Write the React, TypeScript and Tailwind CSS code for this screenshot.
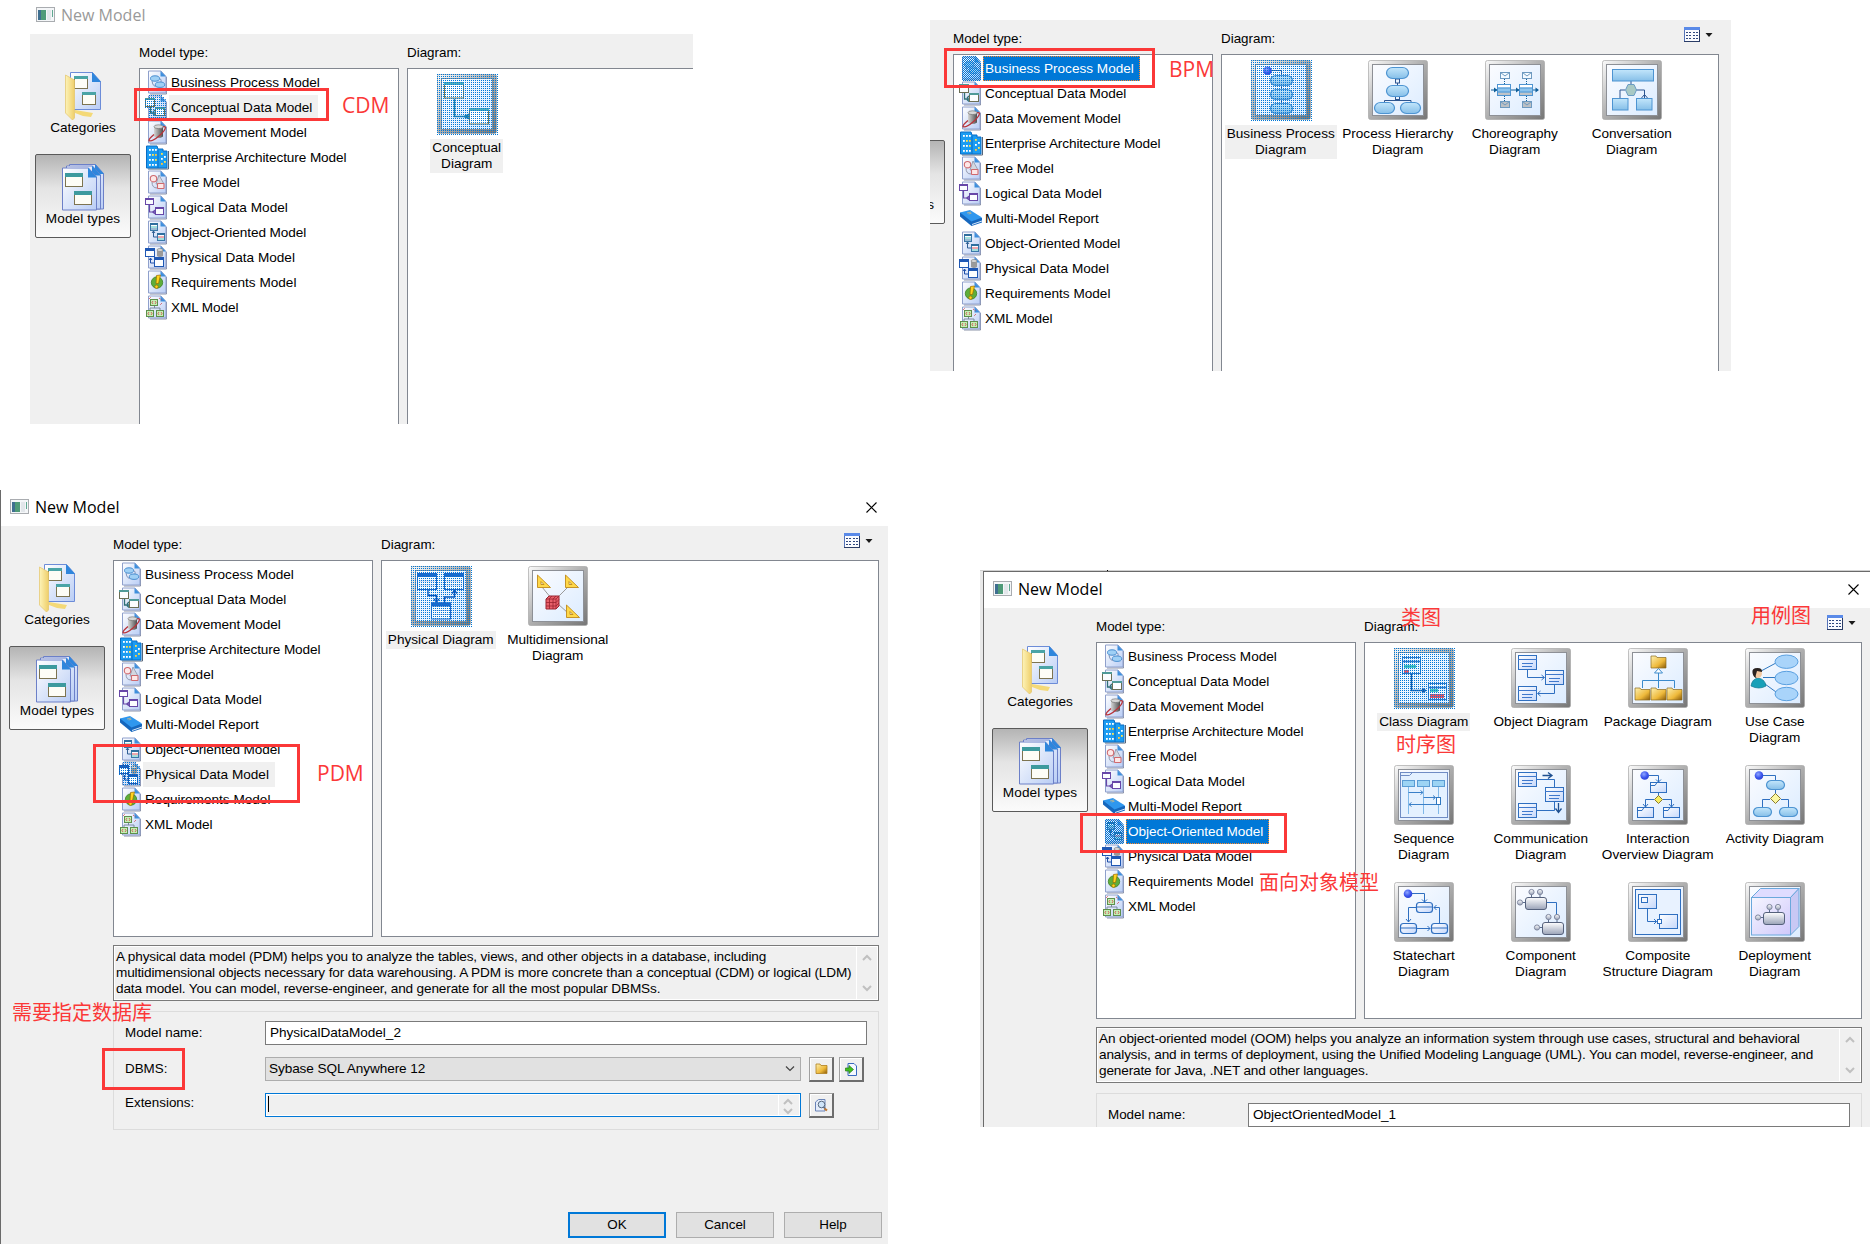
import React from "react";

type Pt = { x: number; y: number };

/* ---------- shared paint servers ---------- */

function Paints() {
  return (
    <svg className="absolute h-0 w-0" aria-hidden="true">
      <defs>
        <linearGradient id="frame" x1="0" y1="0" x2="1" y2="1">
          <stop offset="0" stopColor="#fafafa" />
          <stop offset="0.45" stopColor="#b4b4b4" />
          <stop offset="1" stopColor="#767676" />
        </linearGradient>
        <linearGradient id="glass" x1="0" y1="0" x2="1" y2="1">
          <stop offset="0" stopColor="#fbfcff" />
          <stop offset="1" stopColor="#dcecff" />
        </linearGradient>
        <linearGradient id="paper" x1="0" y1="0" x2="1" y2="1">
          <stop offset="0" stopColor="#ffffff" />
          <stop offset="1" stopColor="#b9cdf5" />
        </linearGradient>
        <linearGradient id="pill" x1="0" y1="0" x2="0" y2="1">
          <stop offset="0" stopColor="#c3e6fb" />
          <stop offset="1" stopColor="#86bfe8" />
        </linearGradient>
        <linearGradient id="box" x1="0" y1="0" x2="1" y2="1">
          <stop offset="0" stopColor="#ffffff" />
          <stop offset="1" stopColor="#c6d8fb" />
        </linearGradient>
        <linearGradient id="gold" x1="0" y1="0" x2="1" y2="1">
          <stop offset="0" stopColor="#fdf0b0" />
          <stop offset="0.6" stopColor="#eeb93a" />
          <stop offset="1" stopColor="#8a5a08" />
        </linearGradient>
        <linearGradient id="folder" x1="0" y1="0" x2="1" y2="0">
          <stop offset="0" stopColor="#fdf3b8" />
          <stop offset="1" stopColor="#efcf6a" />
        </linearGradient>
        <linearGradient id="steel" x1="0" y1="0" x2="0" y2="1">
          <stop offset="0" stopColor="#ffffff" />
          <stop offset="1" stopColor="#9aa3b8" />
        </linearGradient>
        <linearGradient id="drum" x1="0" y1="0" x2="1" y2="0">
          <stop offset="0" stopColor="#d6d6d6" />
          <stop offset="1" stopColor="#4e4e4e" />
        </linearGradient>
        <linearGradient id="lilac" x1="0" y1="0" x2="1" y2="1">
          <stop offset="0" stopColor="#f6f6ff" />
          <stop offset="1" stopColor="#cfc8fb" />
        </linearGradient>
        <radialGradient id="ball" cx="0.4" cy="0.35" r="0.7">
          <stop offset="0" stopColor="#8fa6ff" />
          <stop offset="0.6" stopColor="#3c55ee" />
          <stop offset="1" stopColor="#2a3fd0" />
        </radialGradient>
        <pattern id="dots" width="2" height="2" patternUnits="userSpaceOnUse">
          <rect width="1" height="1" fill="#0078d7" />
        </pattern>
        <pattern id="checks" width="2" height="2" patternUnits="userSpaceOnUse">
          <rect width="1" height="1" fill="#0078d7" />
          <rect x="1" y="1" width="1" height="1" fill="#0078d7" />
        </pattern>
      </defs>
    </svg>
  );
}

/* ---------- list icons, 24 x 24 ---------- */

const Page = () => (
  <>
    <path d="M21.5 7v17H5" fill="none" stroke="#8b93a8" strokeWidth="1" />
    <path d="M3.5 1h12.5l5 5.500v16.500h-17.500z" fill="url(#paper)" stroke="#8fa0cc" />
    <path d="M15.500 1l5.500 5.500h-5.500z" fill="#3f8fdc" />
  </>
);

const MiniBox = ({ x, y, w, h, c, head }: { x: number; y: number; w: number; h: number; c: string; head: string }) => (
  <>
    <rect x={x + 0.5} y={y + 0.5} width={w - 1} height={h - 1} fill="#fbfdff" stroke={c} />
    <rect x={x} y={y} width={w} height={2} fill={head} />
  </>
);

const listIcons: Record<string, React.ReactNode> = {
  bpm: (
    <>
      <Page />
      <path d="M7 11q1 7 6 5M12 8q5 0 4 4" fill="none" stroke="#7f93b8" />
      <ellipse cx="10" cy="8.500" rx="4.500" ry="2.700" fill="#9fd0f5" stroke="#4a8fd0" />
      <ellipse cx="15" cy="14.700" rx="4.700" ry="2.700" fill="#9fd0f5" stroke="#4a8fd0" />
    </>
  ),
  cdm: (
    <>
      <Page />
      <path d="M5.500 12v6h5M8 17l2-2M8 18.500l2 2" fill="none" stroke="#2f6f76" strokeWidth="1.300" />
      <MiniBox x={0} y={3} w={10} h={9} c="#6b6f55" head="#4f9a98" />
      <MiniBox x={10} y={12} w={10} h={9} c="#6b6f55" head="#4f9a98" />
    </>
  ),
  dmm: (
    <>
      <Page />
      <path d="M16.500 7.500Q19.500 6 20.500 7" fill="none" stroke="#b8333a" strokeWidth="1.200" />
      <path d="M9 7v9.500q4.500 3 9 0V7z" fill="url(#drum)" />
      <ellipse cx="13.500" cy="6.700" rx="4.500" ry="1.900" fill="#d8d8d8" stroke="#666" strokeWidth="0.600" />
      <path d="M9 14.500Q3.500 19 4 20.700Q7 22 14 16Q20.500 10.500 20.500 7" fill="none" stroke="#b8333a" strokeWidth="1.300" />
    </>
  ),
  eam: (
    <>
      <path d="M3 24h20.500V6" fill="none" stroke="#566579" strokeWidth="1" />
      <path d="M1.500 1h10.500l1 3h5v2h4v17h-20.500z" fill="#1b9cf2" stroke="#0a6cc4" />
      <path d="M13 5v18" stroke="#0a6cc4" />
      {[
        [4, 4, "#fff"], [7, 4, "#fff"], [10, 4, "#fff"],
        [4, 9, "#fff"], [7, 9, "#ffe14d"], [10, 9, "#ffc83c"],
        [4, 14, "#fff"], [7, 14, "#fff"], [10, 14, "#ffe14d"],
        [4, 19, "#fff"], [7, 19, "#fff"], [10, 19, "#fff"],
        [16, 8, "#ffe14d"], [19, 11, "#fff"], [16, 13, "#fff"], [19, 16, "#ffe14d"], [16, 18, "#ffc83c"],
      ].map(([x, y, c], i) => (
        <rect key={i} x={x as number} y={y as number} width="1.800" height="1.800" fill={c as string} />
      ))}
    </>
  ),
  free: (
    <>
      <Page />
      <path d="M14 5l5 9h-8z" fill="#d4d7e0" stroke="#8c93a8" strokeWidth="0.800" />
      <path d="M7 12q0 6 5 6" fill="none" stroke="#9097ac" />
      <circle cx="8.500" cy="8.700" r="3.200" fill="#fde8e8" stroke="#cf6a6f" strokeWidth="1.100" />
      <rect x="12.500" y="13.500" width="6.500" height="5" rx="0.500" fill="#fde8e8" stroke="#cf6a6f" strokeWidth="1.100" />
    </>
  ),
  ldm: (
    <>
      <Page />
      <path d="M4.500 9v8h6M7.500 17l3-2M7.500 17l3 2" fill="none" stroke="#6747a8" strokeWidth="1.200" />
      <MiniBox x={0} y={3} w={9} h={7} c="#6747a8" head="#6747a8" />
      <MiniBox x={10} y={12} w={9} h={8} c="#6747a8" head="#6747a8" />
    </>
  ),
  report: (
    <>
      <path d="M1 6.500v4L12.500 20l10.500-3.500V12z" fill="#1667bd" />
      <path d="M1 6.500L11 4l12 7.500-10.500 4z" fill="#2f97ee" />
      <path d="M13 18.500l10-3.500" stroke="#dbeafc" />
      <path d="M8 7l4-1M9.500 8l3-.8" stroke="#c9b98a" strokeWidth="0.800" />
    </>
  ),
  oom: (
    <>
      <Page />
      <path d="M8.500 11v6h4M7 13l1.500-2 1.500 2" fill="none" stroke="#2f5f94" />
      <MiniBox x={5} y={3} w={8} h={8} c="#3a78a8" head="#2f6f9f" />
      <path d="M6 7h6" stroke="#4fc0b8" />
      <path d="M6 9h6" stroke="#3a78a8" />
      <MiniBox x={12} y={13} w={8} h={8} c="#3a78a8" head="#2f6f9f" />
      <path d="M13 17h6" stroke="#e0505a" />
      <path d="M13 19h6" stroke="#4fc0b8" />
    </>
  ),
  pdm: (
    <>
      <Page />
      <path d="M12 5v6q3 2 6 0V5z" fill="#9a9a9a" />
      <ellipse cx="15" cy="5" rx="3" ry="1.500" fill="#d8d8d8" stroke="#777" strokeWidth="0.600" />
      <path d="M5.500 13v5h4M4 15l1.500-2 1.500 2" fill="none" stroke="#1f4fa8" />
      <MiniBox x={0} y={3} w={10} h={9} c="#1f58b4" head="#1f58b4" />
      <rect x="0" y="3" width="10" height="3" fill="#1f58b4" />
      <MiniBox x={9} y={12} w={10} h={10} c="#1f58b4" head="#1f58b4" />
      <rect x="9" y="12" width="10" height="3" fill="#1f58b4" />
    </>
  ),
  req: (
    <>
      <Page />
      <circle cx="12" cy="12.500" r="5.700" fill="#5fae3a" stroke="#3c7f28" strokeWidth="0.800" />
      <path d="M11.500 5.500l4-.5-2 8.500h-2.500z" fill="#ffd21e" stroke="#9a6a00" strokeWidth="0.700" />
      <circle cx="11.500" cy="16.700" r="1.700" fill="#ffd21e" stroke="#9a6a00" strokeWidth="0.700" />
    </>
  ),
  xml: (
    <>
      <Page />
      <path d="M9.500 10v3M5 16v-3h10v3" fill="none" stroke="#7a8aa0" />
      <path d="M4 4l2-2M14 3l3 2M17 8l-2 2" stroke="#d0404a" strokeDasharray="1 1" />
      {[
        [5, 4],
        [1, 15],
        [11, 15],
      ].map(([x, y], i) => (
        <g key={i}>
          <rect x={x + 0.5} y={y + 0.5} width="7" height="6" fill="#c4f0b4" stroke="#5f8f4c" />
          <path d={`M${x + 3} ${y + 2}l-1 1.500 1 1.500M${x + 5} ${y + 2}l1 1.500-1 1.500`} fill="none" stroke="#d0404a" strokeWidth="0.800" />
        </g>
      ))}
    </>
  ),
};

const shade: Record<string, string> = {
  bpm: "M3 0h14l5 6v19H3z",
  oom: "M3 0h14l5 6v19H3z",
  cdm: "M3 0h14l5 6v18H3V13H0V3h3z",
  pdm: "M3 0h14l5 6v18H3V13H0V3h3z",
};

function ListIcon({ id, mode }: { id: string; mode?: "soft" | "focus" }) {
  return (
    <svg className="h-[25px] w-6 shrink-0" viewBox="0 0 24 25">
      {listIcons[id]}
      {mode && <path d={shade[id]} fill={mode === "focus" ? "url(#checks)" : "url(#dots)"} />}
    </svg>
  );
}

/* ---------- diagram icons, 60 x 60 ---------- */

const BLUE = "#2f6fc0";

const Wire = ({ d, c = BLUE, w = 1 }: { d: string; c?: string; w?: number }) => <path d={d} fill="none" stroke={c} strokeWidth={w} />;

const Pill = ({ x, y, w, h }: { x: number; y: number; w: number; h: number }) => (
  <rect x={x + 0.5} y={y + 0.5} width={w - 1} height={h - 1} rx={h / 2} fill="url(#pill)" stroke="#4d94d2" strokeWidth="1.200" />
);

const Ball = ({ x, y }: Pt) => <circle cx={x} cy={y} r="4.300" fill="url(#ball)" />;

const Knob = ({ x, y }: Pt) => <circle cx={x} cy={y} r="2.600" fill="url(#steel)" stroke="#8088a0" />;

const ObjBox = ({ x, y }: Pt) => (
  <>
    <rect x={x + 0.5} y={y + 0.5} width="18" height="14" fill="url(#box)" stroke={BLUE} />
    <path d={`M${x} ${y + 4.5}h19M${x + 4} ${y + 8.5}h11M${x + 4} ${y + 11.5}h10`} stroke="#3f78cc" />
  </>
);

const Folder = ({ x, y }: Pt) => (
  <path d={`M${x} ${y + 2}v-2h5l1 1.500h9v10.500h-15z`} fill="url(#gold)" stroke="#8a6a20" strokeWidth="0.700" />
);

const Tabbed = ({ x, y }: Pt) => (
  <>
    <rect x={x + 0.5} y={y + 0.5} width="16" height="10" fill="url(#box)" stroke={BLUE} />
    <path d={`M${x} ${y + 3.5}h5l2-3`} fill="none" stroke={BLUE} />
  </>
);

const Component = ({ x, y }: Pt) => (
  <>
    <path d={`M${x + 6.5} ${y - 3}v4M${x + 15} ${y - 3}v4M${x - 3} ${y + 5.5}h4`} stroke="#5a6c8c" />
    <rect x={x + 0.5} y={y + 0.5} width="21" height="12" rx="2.500" fill="url(#steel)" stroke="#55617c" />
    <Knob x={x + 6.5} y={y - 5} />
    <Knob x={x + 15} y={y - 5} />
    <Knob x={x - 5} y={y + 5.5} />
  </>
);

const StateBox = ({ x, y }: Pt) => (
  <>
    <rect x={x + 0.5} y={y + 0.5} width="16" height="10" rx="3" fill="url(#box)" stroke={BLUE} strokeWidth="1.200" />
    <path d={`M${x} ${y + 5}h17`} stroke={BLUE} />
  </>
);

const Mail = ({ x, y, f }: Pt & { f: string }) => (
  <>
    <rect x={x + 0.5} y={y + 0.5} width="9" height="6" fill={f} stroke="#6e9ac0" />
    <path d={`M${x + 0.5} ${y + 0.5}l4.500 3.500 4.500-3.500`} fill="none" stroke="#6e9ac0" />
  </>
);

const Square = ({ x, y }: Pt) => (
  <path fillRule="evenodd" d={`M${x} ${y}v12.500h13zM${x + 3.5} ${y + 6.5}v3h3z`} fill="#ffd84a" stroke="#c08a1a" strokeWidth="0.900" />
);

const diagramIcons: Record<string, React.ReactNode> = {
  conceptual: (
    <>
      <Wire d="M17.500 25v17.500h15M27 42.500l6-2.500M27 42.500l6 2.500" c="#1f7fa8" w={1.5} />
      {[
        [7, 8],
        [32, 34],
      ].map(([x, y], i) => (
        <g key={i}>
          <rect x={x + 0.5} y={y + 0.5} width="19" height="15.500" fill="#ffffff" stroke="#7b7a55" />
          <rect x={x} y={y} width="20" height="3" fill="#4fb0bc" />
        </g>
      ))}
    </>
  ),
  bpd: (
    <>
      <Wire d="M20 10.500h10.500v5M30.500 25v4.500M30.500 39v4.500" c="#2c5590" />
      <Ball x={16.5} y={10.7} />
      <Pill x={19} y={15} w={23} h={11} />
      <Pill x={19} y={29} w={23} h={11} />
      <Pill x={19} y={43} w={23} h={11} />
    </>
  ),
  hierarchy: (
    <>
      <Wire d="M29.500 18v7M29.500 36v5M16.500 43v-2.500h26.500v2.500" c="#2c5590" />
      <rect x="27.500" y="19" width="4" height="4" fill="#eaf4ff" stroke="#2c5590" />
      <rect x="27.500" y="36.500" width="4" height="3" fill="#eaf4ff" stroke="#2c5590" />
      <Pill x={18} y={7} w={23} h={12} />
      <Pill x={18} y={25} w={23} h={12} />
      <Pill x={6} y={42} w={21} h={12} />
      <Pill x={32} y={42} w={21} h={12} />
    </>
  ),
  choreography: (
    <>
      <path d="M19.500 19v5M41.500 19v5M19.500 36v5M41.500 36v5" stroke="#0f5f9a" strokeDasharray="1 1" />
      <Wire d="M6 30h6M26 30h8M48 30h5" c="#0f5f9a" />
      <path d="M9 27.500l3.500 2.500L9 32.500zM31 27.500l3.500 2.500L31 32.500zM50.500 27.500l3.500 2.500-3.500 2.500z" fill="#0f5f9a" />
      <Mail x={15} y={12} f="#f4faff" />
      <Mail x={37} y={12} f="#f4faff" />
      <Mail x={15} y={41} f="#bcc0c4" />
      <Mail x={37} y={41} f="#bcc0c4" />
      {[12, 34].map((x) => (
        <g key={x}>
          <rect x={x + 0.5} y="24.500" width="13" height="11" fill="#8cc4ee" stroke="#4d94d2" />
          <rect x={x + 1} y="25" width="12" height="2.500" fill="#fff" />
          <rect x={x + 1} y="32.500" width="12" height="2.500" fill="#c0c4c8" />
          <path d={`M${x + 1} 28h12M${x + 1} 32h12`} stroke="#4d94d2" />
        </g>
      ))}
    </>
  ),
  conversation: (
    <>
      <Wire d="M29 21v4M23 30h-5v9M34 30h8.500v9M39.500 38l3-3.500 3 3.500" c="#2c5590" />
      <rect x="10.500" y="9.500" width="41" height="11.500" fill="url(#pill)" stroke="#4d94d2" />
      <path d="M26 24.500h6l2.500 5.500-2.500 5.500h-6l-2.500-5.500z" fill="#a9c9c4" stroke="#6a9cc4" />
      <rect x="10.500" y="38.500" width="15.500" height="11.500" fill="url(#pill)" stroke="#4d94d2" />
      <rect x="34.500" y="38.500" width="15.500" height="11.500" fill="url(#pill)" stroke="#4d94d2" />
    </>
  ),
  physical: (
    <>
      <Wire d="M17 24v5.500h8.500V36M23 33l2.500 3 2.500-3M33.500 37v-6h10v-6M41 27.500l2.500-3 2.500 3" c="#0f52b8" w={1.4} />
      {[
        [6, 7],
        [33, 7],
        [20, 36.5],
      ].map(([x, y], i) => (
        <g key={i}>
          <rect x={x + 0.5} y={y + 0.5} width="19" height="16" fill="#f8fbff" stroke="#1f66c8" />
          <rect x={x} y={y} width="20" height="4" fill="#1f66c8" />
          <path d={`M${x + 2} ${y + 8}h16M${x + 2} ${y + 12}h16`} stroke="#b5c4ee" />
        </g>
      ))}
    </>
  ),
  multi: (
    <>
      <Wire d="M14 21l9 11M40 21L29 32M30 38l10 9" c="#9a9a9a" />
      <Square x={9.5} y={9} />
      <Square x={37.5} y={9} />
      <Square x={38.5} y={39} />
      <path d="M18 33l3-3h10v10l-3 3h-10z" fill="#e8606a" stroke="#9a2430" />
      <path d="M18 33h10v10M28 33l3-3M18 36.500h10l3-3M18 40h10l3-3M21.500 33v10M25 33v10M21 33l3-3M25 33l3-3" fill="none" stroke="#9a2430" strokeWidth="0.800" />
    </>
  ),
  class: (
    <>
      <Wire d="M17.500 26v16.500h12" c="#1558a8" w={1.4} />
      <path d="M28 39.500l5 3-5 3z" fill="#1558a8" />
      {[
        [8, 9],
        [34, 35],
      ].map(([x, y], i) => (
        <g key={i}>
          <rect x={x + 0.5} y={y + 0.5} width="18" height="16" fill="#eef6ff" stroke="#2f78c8" />
          <path d={`M${x} ${y + 4.5}h18`} stroke="#2f78c8" strokeWidth="1.500" />
        </g>
      ))}
      <rect x="10" y="17" width="12" height="3" fill="#49c8c0" />
      <rect x="10" y="22" width="5" height="3" fill="#e0566a" />
      <rect x="36" y="41" width="8" height="3" fill="#49c8c0" />
      <rect x="36" y="46" width="14" height="4" fill="#e0566a" />
    </>
  ),
  object: (
    <>
      <Wire d="M16.500 22v7.500h16.500M30.500 27l3 2.500-3 2.500M43.500 37v8.500H27M29.500 43l-3 2.500 3 2.500" />
      <ObjBox x={7} y={7} />
      <ObjBox x={34} y={22} />
      <ObjBox x={7} y={38} />
    </>
  ),
  package: (
    <>
      <Wire d="M30.500 25v15M14.500 40v-7.500h32v7.500" c="#3a8acc" />
      <path d="M30.500 20.500l4 4.500h-8z" fill="#fff" stroke="#3a8acc" />
      <Folder x={23} y={8} />
      <Folder x={7} y={40} />
      <Folder x={23} y={40} />
      <Folder x={39} y={40} />
    </>
  ),
  usecase: (
    <>
      <Wire d="M17 22.500l13-7M18 29.500h12M20 36l11 8" c="#2f78c0" />
      <ellipse cx="41.500" cy="13.700" rx="11.500" ry="6.700" fill="#a9d4fa" stroke="#5aa0e0" />
      <ellipse cx="41.500" cy="30" rx="11.500" ry="6.700" fill="#a9d4fa" stroke="#5aa0e0" />
      <ellipse cx="41.500" cy="46" rx="11.500" ry="6.700" fill="#a9d4fa" stroke="#5aa0e0" />
      <path d="M6 38q1-7 7-8 7 1 8 8-7 4-15 0z" fill="#18a0b8" stroke="#0e7890" strokeWidth="0.700" />
      <circle cx="12.500" cy="25.500" r="4.500" fill="#f4c8a0" />
      <path d="M7.500 25q-1-5 5-5 5 0 4.500 4l-5-1-1 3.500q-1 3 1 3.500-3.500 0-4.500-5z" fill="#2a2220" />
    </>
  ),
  sequence: (
    <>
      <rect x="6.500" y="7.500" width="47" height="45" fill="#e4f1ff" stroke="#6f8cc4" />
      <path d="M6.500 10.500h9l3-3" fill="none" stroke="#6f8cc4" />
      <path d="M14.500 22v27M29.500 22v27M44.500 22v27" stroke="#7fb8e8" />
      <rect x="8.500" y="15.500" width="12" height="6" fill="#9cd4f4" stroke="#5a9cd4" />
      <rect x="23.500" y="15.500" width="12" height="6" fill="#9cd4f4" stroke="#5a9cd4" />
      <rect x="38.500" y="15.500" width="12" height="6" fill="#9cd4f4" stroke="#5a9cd4" />
      <rect x="42.500" y="32.500" width="4" height="7" fill="#fff" stroke="#2f78c0" />
      <Wire d="M14.500 27.500h14M26.500 25.500l2.500 2-2.500 2M29.500 32.500h12M39 30.500l2.500 2-2.500 2M42 39.500H15M17.500 37.500l-2.500 2 2.500 2" c="#3a80c8" />
    </>
  ),
  communication: (
    <>
      <Wire d="M26 14.500h17.500v8M43.500 37v8.500H26" />
      <Wire d="M31.500 10.500h9.500M37 7.500l4 3-4 3M47.500 38v9M44.500 43.500l3 4 3-4" c="#1f5090" w={1.3} />
      <ObjBox x={7} y={7} />
      <ObjBox x={34} y={22} />
      <ObjBox x={7} y={38} />
    </>
  ),
  interaction: (
    <>
      <Wire d="M21 10.500h9.500v6.500M28 14.500l2.500 2.500 2.500-2.500M30.500 28v3M26 34.500h-8.500V42M15 39l2.500 3 2.500-3M35 34.500h8.500V42M41 39l2.500 3 2.500-3" />
      <Ball x={16.7} y={10.5} />
      <Tabbed x={22} y={17} />
      <Tabbed x={9} y={42} />
      <Tabbed x={35} y={42} />
      <path d="M30.500 30.500l4 4-4 4-4-4z" fill="#f8ee60" stroke="#8a7a30" />
    </>
  ),
  activity: (
    <>
      <Wire d="M18 10.500h12.500v5M30.500 25v4M25 34.500h-7.500V42M36 34.500h7.500V42" />
      <Ball x={14} y={10.5} />
      <Pill x={21} y={15} w={19} h={10} />
      <Pill x={8} y={42} w={19} h={10} />
      <Pill x={34} y={42} w={19} h={10} />
      <path d="M30.500 28.500l5 5-5 5-5-5z" fill="#fbf7a0" stroke="#8a7a30" />
    </>
  ),
  statechart: (
    <>
      <Wire d="M18 11.500h12.500V20M28 17.500l2.500 2.500 2.500-2.500M22 25.500h-7.500V40M12 37l2.500 3 2.500-3M23 46.500h13M33.500 44l2.500 2.500-2.500 2.500M45.500 41V25.500H40M42.500 23L40 25.500l2.500 2.500" />
      <Ball x={14} y={11.7} />
      <StateBox x={22} y={20} />
      <StateBox x={6} y={41} />
      <StateBox x={37} y={41} />
    </>
  ),
  component: (
    <>
      <Wire d="M36 20.500h9.500V33" />
      <Component x={14} y={15} />
      <Component x={31} y={40} />
    </>
  ),
  composite: (
    <>
      <rect x="7.500" y="7.500" width="45" height="45" fill="#e8f2ff" stroke={BLUE} />
      <rect x="10.500" y="12.500" width="18" height="14" fill="url(#box)" stroke={BLUE} />
      <rect x="13.500" y="15.500" width="6" height="5" fill="#f4f8ff" stroke={BLUE} />
      <rect x="31.500" y="32.500" width="18" height="14" fill="url(#box)" stroke={BLUE} />
      <rect x="29.500" y="37.500" width="4" height="4" fill="#fff" stroke={BLUE} />
      <Wire d="M19.500 26.500v13h9M26 37l2.500 2.500L26 42" />
    </>
  ),
  deployment: (
    <>
      <path d="M6.500 15.500l9-9h38.500l-8.500 9z" fill="#dfdcff" stroke="#6aa8dc" />
      <path d="M54 6.500v38l-8.500 8.500v-37.500z" fill="#c8c8f4" stroke="#6aa8dc" />
      <rect x="6.500" y="15.500" width="39" height="37.500" fill="url(#lilac)" stroke="#6aa8dc" />
      <Component x={18} y={30} />
    </>
  ),
};

function DiagramIcon({ id, selected }: { id: string; selected?: boolean }) {
  return (
    <svg className="block h-[61px] w-[61px]" viewBox="0 0 61 61">
      <rect x="0.500" y="0.500" width="59" height="59" rx="2" fill="url(#frame)" stroke="#a8a8a8" strokeOpacity="0.700" />
      <rect x="4.500" y="4.500" width="51" height="51" fill="url(#glass)" stroke="#8d9096" />
      {diagramIcons[id]}
      {selected && <rect width="61" height="61" fill="url(#dots)" />}
    </svg>
  );
}

/* ---------- small window icons ---------- */

const AppIcon = () => (
  <svg className="h-4 w-[19px]" viewBox="0 0 19 16">
    <rect x="0.500" y="0.500" width="18" height="14" fill="#f4f6f8" stroke="#a9acb0" />
    <rect x="2" y="3" width="8" height="10" fill="#4f9a78" />
    <rect x="2" y="3" width="3" height="10" fill="#3f6f90" />
    <rect x="11" y="3" width="4" height="10" fill="#e2e6ea" />
    <rect x="16" y="3" width="1" height="7" fill="#5fa890" />
  </svg>
);

const CloseIcon = () => (
  <svg className="h-[11px] w-[11px]" viewBox="0 0 11 11">
    <path d="M0.500 0.500l10 10M10.500 0.500l-10 10" stroke="#000" strokeWidth="1.100" />
  </svg>
);

const ViewIcon = () => (
  <svg className="h-[15px] w-[29px]" viewBox="0 0 29 15">
    <rect x="0.500" y="0.500" width="15" height="14" fill="#fbfcff" stroke="#5573b8" />
    <rect x="0" y="0" width="16" height="3" fill="#5a8ae8" />
    <path d="M0 14.500h16M15.500 3v12" stroke="#2a3c66" />
    {[5, 8, 11].map((y) => (
      <path key={y} d={`M2 ${y + 0.5}h2M5 ${y + 0.5}h2M9 ${y + 0.5}h2M12 ${y + 0.5}h2`} stroke="#31497f" />
    ))}
    <path d="M21.500 6h7L25 10z" fill="#1a1a1a" />
  </svg>
);

const CategoriesIcon = () => (
  <svg className="h-12 w-9" viewBox="0 0 36 48">
    <path d="M10 38l18 3-2 4-8-1-8-3z" fill="#f4d977" />
    <path d="M5.500 0.500h22l8 9v28h-30z" fill="url(#paper)" stroke="#6c8cd8" />
    <path d="M27 0l9 10h-9z" fill="#2f86dc" />
    <rect x="9.500" y="4.500" width="13" height="12" fill="#fdfdf6" stroke="#7d7450" />
    <rect x="9" y="4" width="14" height="3" fill="#4aa4a6" />
    <rect x="17.500" y="20.500" width="13" height="12" fill="#fdfdf6" stroke="#7d7450" />
    <rect x="17" y="20" width="14" height="3" fill="#4aa4a6" />
    <path d="M0.500 3l9 5v38l-2 2-7-7z" fill="url(#folder)" stroke="#e4c468" strokeWidth="0.700" />
  </svg>
);

const ModelTypesIcon = () => (
  <svg className="h-[47px] w-[42px]" viewBox="0 0 42 47">
    {[
      [7, 0],
      [4, 1.5],
      [0, 3.5],
    ].map(([x, y]) => (
      <g key={x}>
        <path d={`M${x + 0.5} ${y + 0.5}h26l8 9v${45.5 - y - 10 + (x === 0 ? 1 : 0)}h-34z`} fill="url(#paper)" stroke="#6c80c8" />
        <path d={`M${x + 26} ${y}l9 10h-9z`} fill="#2f86dc" />
      </g>
    ))}
    <rect x="3.500" y="9.500" width="17" height="13" fill="#fdfdf6" stroke="#7d7450" />
    <rect x="3" y="9" width="18" height="4" fill="#3d9a9e" />
    <rect x="12.500" y="27.500" width="17" height="13" fill="#fdfdf6" stroke="#7d7450" />
    <rect x="12" y="27" width="18" height="4" fill="#3d9a9e" />
  </svg>
);

/* ---------- dialog pieces ---------- */

type Model = { id: string; name: string; tracking?: string };

const allModels: Model[] = [
  { id: "bpm", name: "Business Process Model" },
  { id: "cdm", name: "Conceptual Data Model", tracking: "tracking-[-0.04px]" },
  { id: "dmm", name: "Data Movement Model", tracking: "tracking-[-0.06px]" },
  { id: "eam", name: "Enterprise Architecture Model", tracking: "tracking-[-0.1px]" },
  { id: "free", name: "Free Model" },
  { id: "ldm", name: "Logical Data Model", tracking: "tracking-[0.03px]" },
  { id: "report", name: "Multi-Model Report", tracking: "tracking-[-0.06px]" },
  { id: "oom", name: "Object-Oriented Model", tracking: "tracking-[-0.07px]" },
  { id: "pdm", name: "Physical Data Model" },
  { id: "req", name: "Requirements Model" },
  { id: "xml", name: "XML Model", tracking: "tracking-[-0.1px]" },
];

function ModelList({ models, selected, focused }: { models: Model[]; selected: string; focused?: boolean }) {
  return (
    <ul className="h-[377px] w-[260px] border border-[#828790] bg-white pt-px pl-[5px]">
      {models.map((m) => {
        const on = m.id === selected;
        const tone = on ? (focused ? "bg-[#0078d7] text-white outline-1 -outline-offset-1 outline-dotted outline-[#ff8728]" : "bg-[#f0f0f0]") : "";
        return (
          <li key={m.id} className="flex h-[25px]">
            <ListIcon id={m.id} mode={on ? (focused ? "focus" : "soft") : undefined} />
            <span className={`h-[25px] pr-1.5 pl-0.5 text-[13.6px] leading-[25px] whitespace-nowrap ${m.tracking ?? ""} ${tone}`}>{m.name}</span>
          </li>
        );
      })}
    </ul>
  );
}

type Diagram = { id: string; lines: string[] };

function DiagramGrid({ items }: { items: Diagram[] }) {
  return (
    <div className="grid h-[377px] w-[498px] auto-rows-[117px] grid-cols-[repeat(4,117px)] border border-[#828790] bg-white pt-[5px] pl-px">
      {items.map((d, i) => (
        <div key={d.id} className="flex flex-col items-center">
          <DiagramIcon id={d.id} selected={i === 0} />
          <div className={`mt-1 mr-[1.5px] px-0.5 py-px text-center text-[13.6px] leading-4 whitespace-nowrap ${i === 0 ? "bg-[#f0f0f0]" : ""}`}>
            {d.lines.map((l) => (
              <div key={l}>{l}</div>
            ))}
          </div>
        </div>
      ))}
    </div>
  );
}

function Sidebar() {
  return (
    <div className="flex w-[112px] flex-col pl-2">
      <div className="mt-[38px] flex w-24 flex-col items-center">
        <CategoriesIcon />
        <span className="text-[13.6px] leading-4">Categories</span>
      </div>
      <div className="mt-[18px] flex h-[84px] w-24 flex-col items-center rounded-[2px] border border-[#5a5a5a] bg-linear-to-b from-[#b4b4b4] via-[#e4e4e4] via-40% to-[#fbfbfb] pt-[9px]">
        <ModelTypesIcon />
        <span className="text-[13.6px] leading-4 tracking-[0.1px]">Model types</span>
      </div>
    </div>
  );
}

const Chevron = ({ up, c = "#c0c0c0" }: { up?: boolean; c?: string }) => (
  <svg className="h-[7px] w-2.5" viewBox="0 0 10 7">
    <path d={up ? "M1 6l4-4 4 4" : "M1 1l4 4 4-4"} fill="none" stroke={c} strokeWidth="2" />
  </svg>
);

function Description({ lines }: { lines: string[] }) {
  return (
    <div className="mt-2 flex h-14 w-[766px] border border-[#7a7a7a] bg-[#f0f0f0] shadow-[inset_0_0_0_1px_#fff]">
      <div className="w-[742px] pt-[3px] pl-0.5 text-[13.6px] leading-4 tracking-[-0.142px] whitespace-nowrap">
        {lines.map((l) => (
          <div key={l}>{l}</div>
        ))}
      </div>
      <div className="flex w-[21px] flex-col items-center justify-between border-l border-white py-2">
        <Chevron up />
        <Chevron />
      </div>
    </div>
  );
}

function ToolButton({ children }: { children: React.ReactNode }) {
  return (
    <div className="flex h-[25px] w-[25px] items-center justify-center border border-r-2 border-b-2 border-[#a0a0a0] border-r-[#6d6d6d] border-b-[#6d6d6d] bg-[#f0f0f0] shadow-[inset_1px_1px_0_#fff]">
      {children}
    </div>
  );
}

const fieldLabel = "w-[140px] text-[13.4px] leading-4";

function NameField({ value }: { value: string }) {
  return (
    <div className="flex items-center">
      <span className={fieldLabel}>Model name:</span>
      <div className="h-6 w-[602px] border border-[#7a7a7a] bg-white pl-1 text-[13.6px] leading-[21px] tracking-[-0.03px]">{value}</div>
    </div>
  );
}

type DialogProps = {
  width: string;
  models: Model[];
  selected: string;
  focused?: boolean;
  diagrams: Diagram[];
  inactive?: boolean;
  children?: React.ReactNode;
};

function Dialog({ width, models, selected, focused, diagrams, inactive, children }: DialogProps) {
  return (
    <section className={`flex h-[754px] shrink-0 flex-col border-l border-[#6a6a6a] bg-[#f0f0f0] ${width}`}>
      <header className="flex h-9 shrink-0 items-center justify-between bg-white pr-[11px] pb-0.5 pl-[9px]">
        <div className="flex items-center gap-[6px]">
          <AppIcon />
          <h1 className={`font-['Open_Sans','Noto_Sans',sans-serif] text-[16px] leading-5 ${inactive ? "text-[#999999]" : "text-black"}`}>New Model</h1>
        </div>
        <CloseIcon />
      </header>
      <div className="flex">
        <Sidebar />
        <div className="flex flex-col">
          <div className="flex h-[34px] w-[766px] pt-[11px] text-[13.4px] leading-4">
            <span className="w-[268px]">Model type:</span>
            <span>Diagram:</span>
            <span className="-mt-1 mr-[6px] ml-auto">
              <ViewIcon />
            </span>
          </div>
          <div className="flex gap-2">
            <ModelList models={models} selected={selected} focused={focused} />
            <DiagramGrid items={diagrams} />
          </div>
          {children}
        </div>
      </div>
    </section>
  );
}

const buttonClass = "h-[26px] w-[98px] border border-[#adadad] bg-[#e1e1e1] text-center text-[13.4px] leading-6";

function PhysicalForm() {
  return (
    <>
      <Description
        lines={[
          "A physical data model (PDM) helps you to analyze the tables, views, and other objects in a database, including",
          "multidimensional objects necessary for data warehousing. A PDM is more concrete than a conceptual (CDM) or logical (LDM)",
          "data model. You can model, reverse-engineer, and generate for all the most popular DBMSs.",
        ]}
      />
      <div className="mt-[10px] flex h-[119px] flex-col border border-[#dcdcdc] pt-[9px] pl-[11px]">
        <NameField value="PhysicalDataModel_2" />
        <div className="mt-3 flex items-start">
          <span className={`${fieldLabel} mt-1`}>DBMS:</span>
          <div className="flex h-6 w-[536px] items-center justify-between border border-[#adadad] bg-[#e1e1e1] pr-[5px] pl-[3px] text-[13.6px] tracking-[-0.09px]">
            Sybase SQL Anywhere 12
            <svg className="h-[6px] w-[10px]" viewBox="0 0 10 6">
              <path d="M1 0.500l4 4 4-4" fill="none" stroke="#444" strokeWidth="1.200" />
            </svg>
          </div>
          <div className="ml-2 flex gap-[5px]">
            <ToolButton>
              <svg className="h-3 w-[13px]" viewBox="0 0 13 12">
                <path d="M1 3V1h4l1 1.500h6v8H1z" fill="url(#gold)" stroke="#b08020" strokeWidth="0.800" />
              </svg>
            </ToolButton>
            <ToolButton>
              <svg className="h-[13px] w-3" viewBox="0 0 12 13">
                <path d="M3 0.500h6l2.500 2.500v9.500H3z" fill="#f4f8ff" stroke="#3a6ac0" />
                <path d="M0.500 5h3.500V2.500L8.500 6.500 4 10.500V8H0.500z" fill="#3fc020" stroke="#2a7a18" strokeWidth="0.700" />
              </svg>
            </ToolButton>
          </div>
        </div>
        <div className="mt-[11px] flex items-start">
          <span className={`${fieldLabel} mt-[2px]`}>Extensions:</span>
          <div className="flex h-6 w-[536px] items-stretch border border-[#0078d7] bg-[#f0f0f0] pl-0.5 shadow-[inset_0_0_0_1px_#fff]">
            <span className="mt-0.5 h-4 w-px bg-black" />
            <div className="ml-auto flex w-[22px] flex-col items-center justify-between border-l border-white pt-[4px] pr-1 pb-px">
              <Chevron up />
              <Chevron />
            </div>
          </div>
          <div className="ml-2">
            <ToolButton>
              <svg className="h-[13px] w-[13px]" viewBox="0 0 13 13">
                <path d="M0.500 3l3-2.500h6.500v11.500H0.500z" fill="#e4ecfa" stroke="#6a84b8" />
                <circle cx="6.500" cy="5.500" r="3.300" fill="#cfe4f8" stroke="#5a6a80" />
                <path d="M8.500 8l1.500 1.500" stroke="#5a6a80" strokeWidth="1.500" />
                <path d="M9.500 9.500l2.500 2" stroke="#c07830" strokeWidth="2.200" />
              </svg>
            </ToolButton>
          </div>
        </div>
      </div>
      <div className="mt-[82px] -mr-[3px] flex justify-end gap-[10px]">
        <div className="h-[26px] w-[98px] border-2 border-[#0078d7] bg-[#e1e1e1] text-center text-[13.4px] leading-[22px]">OK</div>
        <div className={buttonClass}>Cancel</div>
        <div className={buttonClass}>Help</div>
      </div>
    </>
  );
}

function ObjectForm() {
  return (
    <>
      <Description
        lines={[
          "An object-oriented model (OOM) helps you analyze an information system through use cases, structural and behavioral",
          "analysis, and in terms of deployment, using the Unified Modeling Language (UML). You can model, reverse-engineer, and",
          "generate for Java, .NET and other languages.",
        ]}
      />
      <div className="mt-[10px] flex h-[119px] flex-col border border-[#dcdcdc] pt-[9px] pl-[11px]">
        <NameField value="ObjectOrientedModel_1" />
      </div>
    </>
  );
}

/* ---------- red mark-up laid over the dialogs ---------- */

const Mark = ({ at }: { at: string }) => <div className={`absolute border-[3px] border-[#fb3838] ${at}`} />;

const Note = ({ at, children }: { at: string; children: string }) => (
  <div className={`absolute leading-6 whitespace-nowrap text-[#fb3838] ${at}`}>{children}</div>
);

const latin = "font-['Open_Sans','Noto_Sans',sans-serif] text-[21px]";
const han = "font-['Noto_Sans_CJK_SC',sans-serif] text-[20px]";

export default function App() {
  return (
    <main className="relative flex h-[1245px] w-[1871px] overflow-hidden bg-white font-['Liberation_Sans',Arial,sans-serif] text-black">
      <Paints />
      <div className="flex w-[930px] flex-col">
        <div className="ml-[30px] flex h-[424px] w-[663px] overflow-hidden">
          <div className="-mt-[2px] -ml-1">
            <Dialog
              width="w-[888px]"
              inactive
              models={allModels.filter((m) => m.id !== "report")}
              selected="cdm"
              diagrams={[{ id: "conceptual", lines: ["Conceptual", "Diagram"] }]}
            />
          </div>
        </div>
        <div className="mt-[66px]">
          <Dialog
            width="w-[888px]"
            models={allModels}
            selected="pdm"
            diagrams={[
              { id: "physical", lines: ["Physical Diagram"] },
              { id: "multi", lines: ["Multidimensional", "Diagram"] },
            ]}
          >
            <PhysicalForm />
          </Dialog>
        </div>
      </div>
      <div className="flex w-[941px] flex-col">
        <div className="mt-5 flex h-[351px] w-[801px] overflow-hidden">
          <div className="-mt-9 -ml-[90px]">
            <Dialog
              width="w-[891px]"
              models={allModels}
              selected="bpm"
              focused
              diagrams={[
                { id: "bpd", lines: ["Business Process", "Diagram"] },
                { id: "hierarchy", lines: ["Process Hierarchy", "Diagram"] },
                { id: "choreography", lines: ["Choreography", "Diagram"] },
                { id: "conversation", lines: ["Conversation", "Diagram"] },
              ]}
            />
          </div>
        </div>
        <div className="mt-[199px] ml-[50px] h-[557px] w-[890px] overflow-hidden border-t border-[#d0d0d0] bg-[#e9e9e9] pl-[3px]">
          <div className="border-t border-[#6a6a6a]">
            <Dialog
              width="w-[887px]"
              models={allModels}
              selected="oom"
              focused
              diagrams={[
                { id: "class", lines: ["Class Diagram"] },
                { id: "object", lines: ["Object Diagram"] },
                { id: "package", lines: ["Package Diagram"] },
                { id: "usecase", lines: ["Use Case", "Diagram"] },
                { id: "sequence", lines: ["Sequence", "Diagram"] },
                { id: "communication", lines: ["Communication", "Diagram"] },
                { id: "interaction", lines: ["Interaction", "Overview Diagram"] },
                { id: "activity", lines: ["Activity Diagram"] },
                { id: "statechart", lines: ["Statechart", "Diagram"] },
                { id: "component", lines: ["Component", "Diagram"] },
                { id: "composite", lines: ["Composite", "Structure Diagram"] },
                { id: "deployment", lines: ["Deployment", "Diagram"] },
              ]}
            >
              <ObjectForm />
            </Dialog>
          </div>
        </div>
      </div>

      <div className="absolute top-[570px] left-[1107px] h-px w-px bg-black" />
      <Mark at="left-[134px] top-[88px] h-[33px] w-[195px]" />
      <Mark at="left-[944px] top-[48px] h-[40px] w-[211px]" />
      <Mark at="left-[93px] top-[744px] h-[59px] w-[207px]" />
      <Mark at="left-[102px] top-[1048px] h-[42px] w-[83px]" />
      <Mark at="left-[1080px] top-[813px] h-[40px] w-[207px]" />
      <Note at={`left-[342px] top-[93px] ${latin}`}>CDM</Note>
      <Note at={`left-[1169px] top-[57px] w-[44px] overflow-hidden ${latin}`}>BPM</Note>
      <Note at={`left-[317px] top-[761px] ${latin}`}>PDM</Note>
      <Note at={`left-[12px] top-[1000px] ${han}`}>需要指定数据库</Note>
      <Note at={`left-[1401px] top-[605px] ${han}`}>类图</Note>
      <Note at={`left-[1751px] top-[603px] ${han}`}>用例图</Note>
      <Note at={`left-[1396px] top-[732px] ${han}`}>时序图</Note>
      <Note at={`left-[1259px] top-[870px] ${han}`}>面向对象模型</Note>
    </main>
  );
}
